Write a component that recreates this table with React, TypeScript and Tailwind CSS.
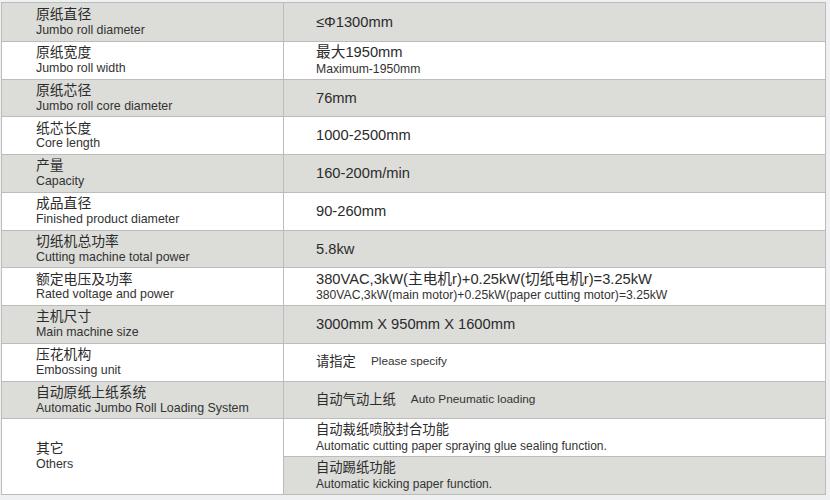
import React from 'react';

type Spec = {
  zh: string;
  en: string;
  value: React.ReactNode;
  grey: boolean;
};

const font = { fontFamily: '"Liberation Sans", "Noto Sans CJK SC", sans-serif' };

// Single or two-line value cell content
function Val({ main, sub }: { main: string; sub?: string }) {
  return (
    <div className="flex flex-col justify-center leading-none">
      <span className="text-[14.7px] text-[#2b2b2b]">{main}</span>
      {sub && <span className="mt-[3px] text-[12.2px] text-[#333]">{sub}</span>}
    </div>
  );
}

function Pair({ zh, en }: { zh: string; en: string }) {
  return (
    <div className="flex items-center leading-none">
      <span className="text-[13.3px] text-[#2b2b2b]">{zh}</span>
      <span className="ml-[15px] text-[11.8px] text-[#333]">{en}</span>
    </div>
  );
}

const specs: Spec[] = [
  { zh: '原纸直径', en: 'Jumbo roll diameter', value: <Val main="≤Φ1300mm" />, grey: true },
  { zh: '原纸宽度', en: 'Jumbo roll width', value: <Val main="最大1950mm" sub="Maximum-1950mm" />, grey: false },
  { zh: '原纸芯径', en: 'Jumbo roll core diameter', value: <Val main="76mm" />, grey: true },
  { zh: '纸芯长度', en: 'Core length', value: <Val main="1000-2500mm" />, grey: false },
  { zh: '产量', en: 'Capacity', value: <Val main="160-200m/min" />, grey: true },
  { zh: '成品直径', en: 'Finished product diameter', value: <Val main="90-260mm" />, grey: false },
  { zh: '切纸机总功率', en: 'Cutting machine total power', value: <Val main="5.8kw" />, grey: true },
  {
    zh: '额定电压及功率',
    en: 'Rated voltage and power',
    value: (
      <Val
        main="380VAC,3kW(主电机r)+0.25kW(切纸电机r)=3.25kW"
        sub="380VAC,3kW(main motor)+0.25kW(paper cutting motor)=3.25kW"
      />
    ),
    grey: false,
  },
  { zh: '主机尺寸', en: 'Main machine size', value: <Val main="3000mm X 950mm X 1600mm" />, grey: true },
  { zh: '压花机构', en: 'Embossing unit', value: <Pair zh="请指定" en="Please specify" />, grey: false },
  {
    zh: '自动原纸上纸系统',
    en: 'Automatic Jumbo Roll Loading System',
    value: <Pair zh="自动气动上纸" en="Auto Pneumatic loading" />,
    grey: true,
  },
];

function Label({ zh, en }: { zh: string; en: string }) {
  return (
    <div className="flex flex-col leading-none">
      <span className="text-[13.8px] text-[#2b2b2b]">{zh}</span>
      <span className="mt-[2px] text-[12.4px] text-[#333]">{en}</span>
    </div>
  );
}

export default function App() {
  return (
    <div className="w-[830px] h-[500px] bg-[#eef0f1] pt-[2px] pl-[1px]" style={font}>
      <div className="w-[825px] border border-[#bcbcbc] flex flex-col">
        {specs.map((s, i) => (
          <div
            key={s.zh}
            className={`flex h-[37.75px] ${i > 0 ? 'border-t border-[#bcbcbc]' : ''} ${
              s.grey ? 'bg-[#dcdcd9]' : 'bg-white'
            }`}
          >
            <div className="w-[282px] pl-[34px] flex items-center border-r border-[#bcbcbc]">
              <Label zh={s.zh} en={s.en} />
            </div>
            <div className="flex-1 pl-[32px] flex items-center">{s.value}</div>
          </div>
        ))}
        <div className="flex h-[75.5px] border-t border-[#bcbcbc] bg-white">
          <div className="w-[282px] pl-[34px] flex items-center border-r border-[#bcbcbc]">
            <Label zh="其它" en="Others" />
          </div>
          <div className="flex-1 flex flex-col">
            <div className="flex-1 pl-[32px] flex items-center bg-white">
              <div className="flex flex-col leading-none">
                <span className="text-[13.3px] text-[#2b2b2b]">自动裁纸喷胶封合功能</span>
                <span className="mt-[3px] text-[12px] text-[#333]">
                  Automatic cutting paper spraying glue sealing function.
                </span>
              </div>
            </div>
            <div className="flex-1 pl-[32px] flex items-center bg-[#dcdcd9] border-t border-[#bcbcbc]">
              <div className="flex flex-col leading-none">
                <span className="text-[13.3px] text-[#2b2b2b]">自动踢纸功能</span>
                <span className="mt-[3px] text-[12px] text-[#333]">Automatic kicking paper function.</span>
              </div>
            </div>
          </div>
        </div>
      </div>
    </div>
  );
}
